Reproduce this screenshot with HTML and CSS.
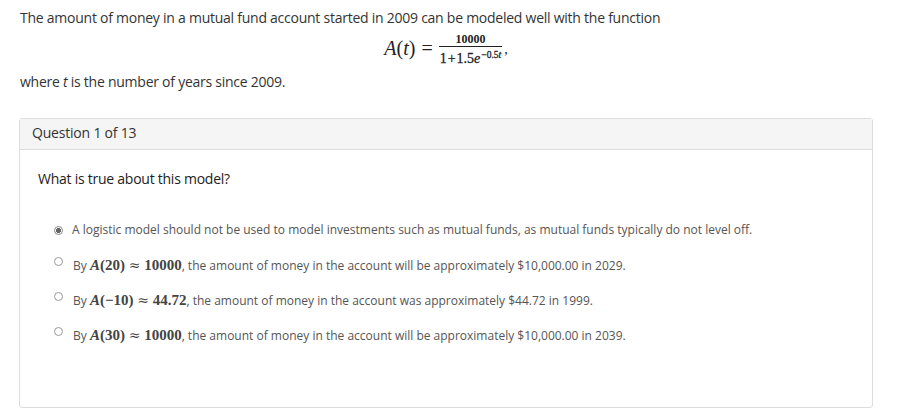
FILE: index.html
```html
<!DOCTYPE html>
<html>
<head>
<meta charset="utf-8">
<link rel="stylesheet" href="styles.css">
</head>
<body>
<div class="page">
  <p class="intro">The amount of money in a mutual fund account started in 2009 can be modeled well with the function</p>
  <div class="formula">
    <span class="m-big"><i>A</i>(<i>t</i>)</span>
    <span class="m-eq">=</span>
    <span class="frac">
      <span class="num">10000</span>
      <span class="den">1<span class="plus">+</span>1.5<i>e</i><sup>−0.5<i>t</i></sup></span>
    </span>
    <span class="m-comma">,</span>
  </div>
  <p class="intro where">where <i class="var">t</i> is the number of years since 2009.</p>

  <div class="panel">
    <div class="panel-head">Question 1 of 13</div>
    <div class="panel-body">
      <p class="question">What is true about this model?</p>
      <ul class="options">
        <li class="opt"><span class="radio checked"></span><span class="opt-text">A logistic model should not be used to model investments such as mutual funds, as mutual funds typically do not level off.</span></li>
        <li class="opt"><span class="radio"></span><span class="opt-text">By <span class="mm"><i>A</i>(20) <span class="approx">≈</span> 10000</span>, the amount of money in the account will be approximately $10,000.00 in 2029.</span></li>
        <li class="opt"><span class="radio"></span><span class="opt-text">By <span class="mm"><i>A</i>(−10) <span class="approx">≈</span> 44.72</span>, the amount of money in the account was approximately $44.72 in 1999.</span></li>
        <li class="opt"><span class="radio"></span><span class="opt-text">By <span class="mm"><i>A</i>(30) <span class="approx">≈</span> 10000</span>, the amount of money in the account will be approximately $10,000.00 in 2039.</span></li>
      </ul>
    </div>
  </div>
</div>
</body>
</html>
```
FILE: styles.css
```css
html, body {
  margin: 0;
  padding: 0;
  background: #fff;
}
.page {
  padding: 8px 35px 6px 19px;
  font-family: "Open Sans", "Noto Sans", sans-serif;
  color: #333;
}
.intro {
  margin: 0;
  padding-left: 1px;
  font-size: 14px;
  line-height: 20px;
  letter-spacing: -0.25px;
}
.where {
  margin-top: 4px;
}
.var {
  font-style: italic;
}
.formula {
  display: flex;
  justify-content: center;
  align-items: center;
  gap: 6px;
  height: 40px;
  font-family: "Liberation Serif", "DejaVu Serif", serif;
  color: #222;
  padding-left: 0;
}
.m-big {
  font-size: 20px;
}
.m-eq {
  font-size: 20px;
}
.frac {
  display: inline-flex;
  flex-direction: column;
  align-items: center;
  font-weight: bold;
  font-size: 12px;
  line-height: 12px;
  margin-top: 3px;
}
.num {
  padding: 0 5px 1px;
  border-bottom: 1px solid #222;
  width: 100%;
  text-align: center;
  box-sizing: border-box;
}
.den {
  padding: 1px 1px 0;
  font-size: 14px;
  line-height: 14px;
  font-weight: normal;
  -webkit-text-stroke: 0.3px #222;
}
.plus {
  margin: 0 1px;
}
.den sup {
  font-size: 9.5px;
  vertical-align: 5px;
  margin-left: 1px;
}
.m-comma {
  font-size: 14px;
  margin-left: -4px;
  margin-top: 4px;
}
.panel {
  margin-top: 26px;
  border: 1px solid #ddd;
  border-radius: 3px;
  height: 288px;
}
.panel-head {
  background: #f5f5f5;
  border-bottom: 1px solid #ddd;
  height: 30px;
  padding: 0 12px;
  font-size: 14px;
  line-height: 28px;
  color: #333;
  letter-spacing: -0.2px;
}
.panel-body {
  padding: 18px 18px 0 18px;
}
.question {
  margin: 0;
  font-size: 14px;
  line-height: 22px;
  color: #222;
  letter-spacing: -0.25px;
}
.options {
  list-style: none;
  margin: 32px 0 0 0;
  padding: 0 0 0 16px;
}
.opt {
  display: flex;
  align-items: center;
  height: 35px;
  font-size: 12px;
  color: #555;
}
.opt:first-child {
  height: 26px;
  align-items: flex-start;
}
.radio {
  width: 9px;
  height: 9px;
  border: 1px solid #999;
  border-radius: 50%;
  box-sizing: border-box;
  margin-right: 9px;
  flex: none;
  background: #fff;
}
.opt:first-child .radio {
  margin-top: 4px;
}
.radio.checked {
  background: radial-gradient(circle, #666 0 2.4px, #fff 2.6px);
  border-color: #888;
}
.opt + .opt .radio {
  margin-top: -8px;
}
.opt + .opt .opt-text {
  margin-left: 1px;
}
.opt-text {
  line-height: 16px;
}
.mm {
  font-family: "Liberation Serif", "DejaVu Serif", serif;
  font-weight: bold;
  font-size: 15px;
  color: #444;
}
.approx {
  font-weight: normal;
  font-family: "DejaVu Serif", serif;
  font-size: 14px;
}
```
